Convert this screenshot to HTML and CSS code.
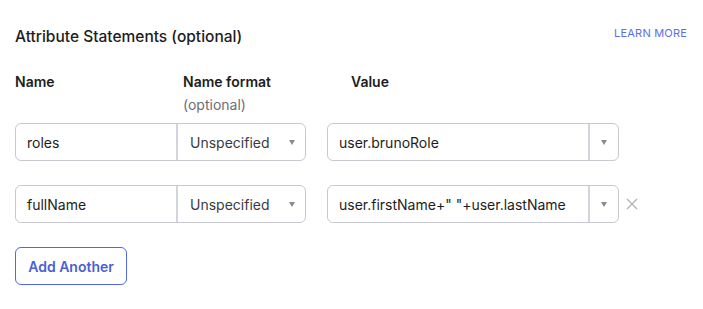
FILE: index.html
```html
<!DOCTYPE html>
<html lang="en">
<head>
  <meta charset="UTF-8">
  <title>Attribute Statements</title>
  <link rel="stylesheet" href="styles.css">
</head>
<body>
  <div class="section">
    <div class="section-head">
      <h2>Attribute Statements (optional)</h2>
      <a class="learn" href="#">LEARN MORE</a>
    </div>

    <!-- Column headers -->
    <div class="cols">
      <div class="col-label">Name</div>
      <div class="col-label">Name format<span class="hint">(optional)</span></div>
      <div class="col-label">Value</div>
    </div>

    <!-- Attribute rows -->
    <div class="attr-row">
      <div class="name-group">
        <div class="field name-field">roles</div>
        <div class="field format-field">Unspecified<span class="caret"></span></div>
      </div>
      <div class="value-combo">
        <div class="value-text">user.brunoRole</div>
        <div class="value-toggle"><span class="caret"></span></div>
      </div>
    </div>

    <div class="attr-row">
      <div class="name-group">
        <div class="field name-field">fullName</div>
        <div class="field format-field">Unspecified<span class="caret"></span></div>
      </div>
      <div class="value-combo">
        <div class="value-text">user.firstName+" "+user.lastName</div>
        <div class="value-toggle"><span class="caret"></span></div>
      </div>
      <button class="remove" aria-label="Remove">
        <svg width="14" height="14" viewBox="0 0 14 14"><path d="M2 2L12 12M12 2L2 12" stroke="#b4b4ba" stroke-width="1.4" fill="none"/></svg>
      </button>
    </div>

    <button class="add-btn">Add Another</button>
  </div>
</body>
</html>
```

FILE: styles.css
```css
body {
  margin: 0;
  font-family: Inter, "Noto Sans", sans-serif;
  color: #1d1d21;
  background: #fff;
}

.section {
  padding: 23px 16px 0 15px;
}

.section-head {
  display: flex;
  justify-content: space-between;
  align-items: flex-start;
}

.section-head h2 {
  margin: 4px 0 0;
  font-size: 15.5px;
  font-weight: 500;
  line-height: 20px;
}

.learn {
  font-size: 11px;
  line-height: 20px;
  letter-spacing: 0.2px;
  color: #5a6fe6;
  text-decoration: none;
}

/* Column headers */
.cols {
  display: grid;
  grid-template-columns: 168px 168px auto;
  margin-top: 25px;
}

.col-label {
  font-size: 14px;
  font-weight: 600;
  line-height: 20px;
}

.hint {
  display: block;
  margin-top: 3px;
  font-weight: 400;
  color: #6e6e78;
}

/* Rows */
.attr-row {
  display: flex;
  align-items: center;
  height: 38px;
  margin-top: 24px;
}

.cols + .attr-row {
  margin-top: 8px;
}

.name-group {
  display: flex;
  height: 100%;
  border: 1px solid #c8c8cf;
  border-radius: 6px;
  box-sizing: border-box;
}

.field {
  display: flex;
  align-items: center;
  font-size: 14px;
  box-sizing: border-box;
}

.name-field {
  width: 162px;
  padding-left: 11px;
  border-right: 2px solid #d4d4da;
}

.format-field {
  width: 127px;
  padding: 0 10px 0 12px;
  justify-content: space-between;
  color: #3a3a42;
}

.caret {
  width: 0;
  height: 0;
  border-left: 3.5px solid transparent;
  border-right: 3.5px solid transparent;
  border-top: 5px solid #8a8a92;
}

.value-combo {
  display: flex;
  width: 292px;
  height: 100%;
  margin-left: 21px;
  border: 1px solid #c8c8cf;
  border-radius: 6px;
  box-sizing: border-box;
}

.value-text {
  flex: 1;
  display: flex;
  align-items: center;
  padding-left: 11px;
  font-size: 14px;
  border-right: 2px solid #d4d4da;
}

.value-toggle {
  width: 28px;
  display: flex;
  align-items: center;
  justify-content: center;
}

.remove {
  display: flex;
  margin-left: 6px;
  padding: 0;
  border: none;
  background: none;
  cursor: pointer;
}

.add-btn {
  display: block;
  width: 112px;
  height: 38px;
  margin-top: 24px;
  padding: 0;
  font-family: inherit;
  font-size: 14px;
  font-weight: 600;
  color: #4a5fd6;
  background: #fff;
  border: 1px solid #5268e0;
  border-radius: 6px;
  cursor: pointer;
}
```
